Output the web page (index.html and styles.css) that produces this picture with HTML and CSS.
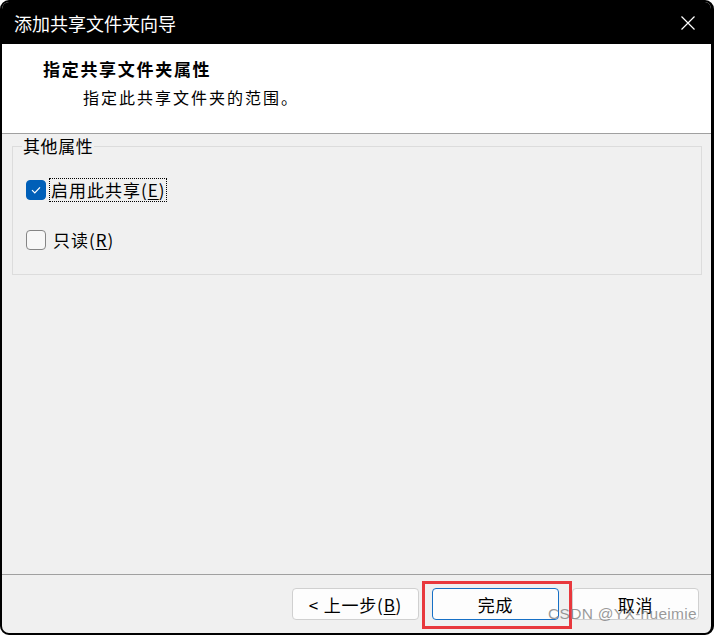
FILE: index.html
```html
<!DOCTYPE html>
<html lang="zh">
<head>
<meta charset="utf-8">
<link rel="stylesheet" href="styles.css">
</head>
<body>
<div class="window">
  <div class="titlebar">
    <span class="title">添加共享文件夹向导</span>
    <svg class="close" width="16" height="16" viewBox="0 0 16 16"><path d="M1.5 1.5 L14.5 14.5 M14.5 1.5 L1.5 14.5" stroke="#fff" stroke-width="1.2" fill="none"/></svg>
  </div>
  <div class="header">
    <div class="heading">指定共享文件夹属性</div>
    <div class="subheading">指定此共享文件夹的范围。</div>
  </div>
  <div class="body">
    <fieldset class="group">
      <legend>其他属性</legend>
      <div class="row">
        <span class="box checked"><svg width="12" height="10" viewBox="0 0 12 10"><path d="M2 5.2 L4.8 8 L10 2.3" stroke="#fff" stroke-width="1.2" fill="none"/></svg></span>
        <span class="label focus">启用此共享(<u>E</u>)</span>
      </div>
      <div class="row">
        <span class="box"></span>
        <span class="label">只读(<u>R</u>)</span>
      </div>
    </fieldset>
  </div>
  <div class="footer">
    <button class="btn">&lt; 上一步(<u>B</u>)</button>
    <button class="btn default">完成<span class="mark"></span></button>
    <button class="btn">取消</button>
    <span class="watermark">CSDN @YX-hueimie</span>
  </div>
</div>
</body>
</html>
```
FILE: styles.css
```css
* { box-sizing: border-box; }
html, body { margin: 0; padding: 0; background: #fff; }
body {
  width: 714px; height: 635px;
  font-family: "Noto Sans CJK SC", "Noto Sans", sans-serif;
  color: #000;
}
.window {
  width: 714px; height: 635px;
  border: 2px solid #000;
  border-right-width: 3px;
  border-radius: 9px;
  overflow: hidden;
  background: #f0f0f0;
  display: flex; flex-direction: column;
}
.titlebar {
  height: 42px; flex: none;
  background: #000;
  display: flex; align-items: center; justify-content: space-between;
  padding: 0 15px 0 12px;
}
.title { color: #fff; font-size: 18px; line-height: 24px; }
.close { display: block; margin-top: 0; }
.header {
  height: 90px; flex: none;
  background: #fff;
  border-bottom: 1px solid #a0a0a0;
  padding: 13px 0 0 41px;
}
.heading { font-size: 17px; font-weight: bold; letter-spacing: 1.7px; line-height: 24px; }
.subheading { font-size: 16px; letter-spacing: 2px; line-height: 24px; margin-top: 4px; padding-left: 40px; }
.body { flex: 1; padding: 2px 9px 0 10px; position: relative; }
.group {
  margin: 0; height: 139px;
  border: 1px solid #dcdcdc;
  padding: 22px 0 0 13px;
}
.group legend { font-size: 17px; line-height: 20px; padding: 0 1px; margin-left: -4px; letter-spacing: 0.6px; }
.row { display: flex; align-items: center; height: 24px; margin-bottom: 26px; }
.box {
  width: 20px; height: 20px; flex: none;
  border: 1px solid #858585; border-radius: 4px; background: #f7f7f7;
  display: flex; align-items: center; justify-content: center;
}
.box.checked { background: #005fb8; border-color: #005fb8; }
.label { font-size: 17px; line-height: 22px; margin-left: 6px; padding: 0 1px; letter-spacing: 1px; }
.label.focus { outline: 1px dotted #000; margin-left: 4px; padding: 0 0 0 1px; }
.label u { text-underline-offset: 2px; }
.footer {
  height: 59px; flex: none;
  border-top: 1px solid #a0a0a0;
  display: flex; justify-content: flex-end; align-items: flex-start;
  padding: 13px 12px 0 0; gap: 13px;
  position: relative;
}
.btn {
  width: 127px; height: 32px;
  background: #fdfdfd;
  border: 1px solid #d0d0d0; border-radius: 4px;
  font-family: inherit; font-size: 17px; color: #000;
  padding: 0; position: relative;
  letter-spacing: 0.8px;
}
.btn.default { border-color: #1670c6; }
.btn u { text-underline-offset: 2px; }
.mark {
  position: absolute; left: -11px; top: -8px; right: -14px; bottom: -10px;
  border: 3px solid #e8383d;
}
.watermark {
  position: absolute; right: 14px; bottom: 10px;
  font-family: "Liberation Sans", Arial, sans-serif; font-size: 15.5px;
  color: rgba(120,120,120,0.75);
  letter-spacing: 0.3px;
}
```
